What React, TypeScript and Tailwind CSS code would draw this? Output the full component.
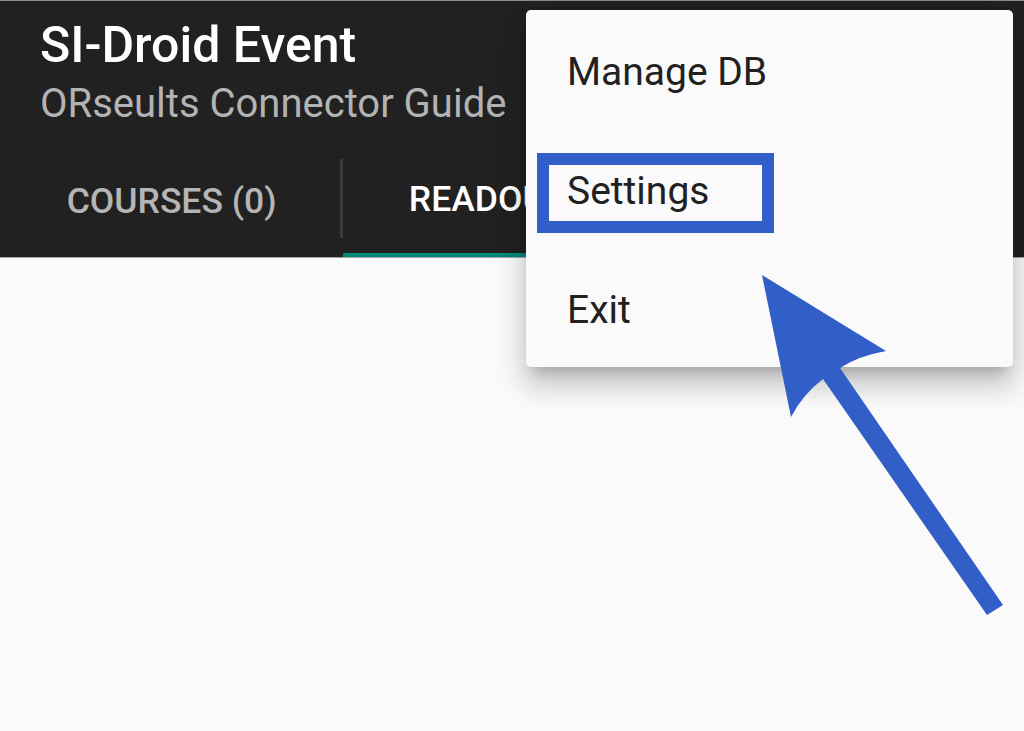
const font = { fontFamily: "Roboto, 'Noto Sans', sans-serif" };

function MenuItem({ label }: { label: string }) {
  return (
    <div className="flex h-[119px] items-center pl-[41px] pt-[4px] text-[39px] leading-[46px] text-[#212121]">
      {label}
    </div>
  );
}

export default function App() {
  return (
    <div
      className="relative h-[731px] w-[1024px] overflow-hidden bg-[#fafafa]"
      style={font}
    >
      {/* App bar */}
      <div className="flex h-[258px] flex-col border-t border-b border-t-[#8a8a8a] border-b-[#a3a3a3] bg-[#212121]">
        <div className="pl-[40px] pt-[16px]">
          <div className="text-[50px] font-medium leading-[57px] text-white">SI-Droid Event</div>
          <div className="mt-[6px] text-[40px] leading-[47px] text-[#b3b3b3]">
            ORseults Connector Guide
          </div>
        </div>

        {/* Tabs */}
        <div className="mt-auto flex h-[117px]">
          <div className="flex w-[342px] items-center justify-center pt-[6px] pl-[3px] text-[35.5px] font-medium leading-[41px] text-[#b5b5b5]">
            COURSES (0)
          </div>
          <div className="mt-[19px] h-[79px] w-[3px] bg-[#3c3c3c]" />
          <div className="flex w-[342px] items-center justify-center border-b-[4px] border-[#00897b] pt-[6px] pl-[24px] text-[35.5px] font-medium leading-[41px] text-white">
            READOUTS (0)
          </div>
          <div className="flex w-[342px] items-center justify-center pt-[6px] text-[35.5px] font-medium leading-[41px] text-[#b5b5b5]">
            RESULTS
          </div>
        </div>
      </div>

      {/* Overflow menu */}
      <div className="absolute left-[526px] top-[10px] w-[487px] rounded-[5px] bg-[#fafafa] shadow-[0_20px_25px_2px_rgba(0,0,0,0.12),0_8px_35px_5px_rgba(0,0,0,0.10),0_12px_12px_-7px_rgba(0,0,0,0.18)]">
        <MenuItem label="Manage DB" />
        <MenuItem label="Settings" />
        <MenuItem label="Exit" />
      </div>

      {/* Annotation highlight */}
      <div className="absolute left-[537px] top-[153px] h-[80px] w-[237px] border-[12px] border-[#315fc7]" />

      {/* Annotation arrow */}
      <svg className="absolute left-0 top-0" width="1024" height="731" viewBox="0 0 1024 731">
        <path
          d="M762 275 L886 351 Q858 356 840 368 L1003 605 L987 615 L823 379 Q803 394 791 417 Z"
          fill="#315fc7"
        />
      </svg>
    </div>
  );
}
